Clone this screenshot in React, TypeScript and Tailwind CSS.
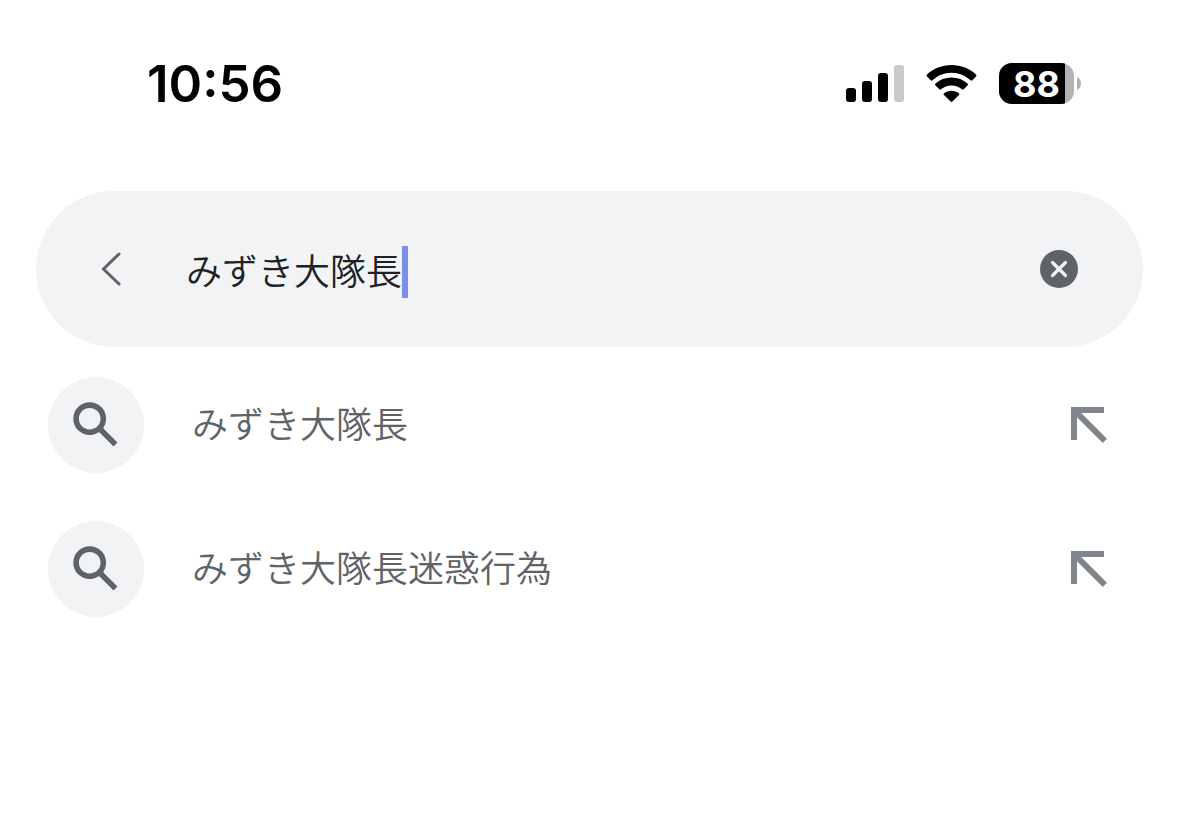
import { useState } from 'react';

const suggestions = ['みずき大隊長', 'みずき大隊長迷惑行為'];

const SignalIcon = () => (
  <svg width="58" height="37" viewBox="0 0 58 37" aria-hidden="true">
    <rect x="0" y="23" width="10" height="14" rx="3" />
    <rect x="16" y="16" width="10" height="21" rx="3" />
    <rect x="32" y="8" width="10" height="29" rx="3" />
    <rect x="48" y="0" width="10" height="37" rx="3" fill="#cacaca" />
  </svg>
);

const WifiIcon = () => (
  <svg width="51" height="37" viewBox="0 0 50 37" aria-hidden="true">
    <path d="M.5 9.500C7 3.500 15.500 0 25 0s18 3.500 24.500 9.500c.6.600.6 1.400 0 2l-3.700 3.800c-.5.500-1.200.5-1.800 0C39 10.500 32.500 7.700 25 7.700S11 10.500 6 15.300c-.6.500-1.300.5-1.800 0L.5 11.500c-.6-.6-.6-1.400 0-2z" />
    <path d="M9 18.500c4.200-3.700 9.700-5.900 16-5.900s11.800 2.200 16 5.900c.6.600.6 1.400 0 2l-3.800 3.800c-.5.500-1.200.5-1.800 0-2.800-2.300-6.400-3.800-10.400-3.800s-7.600 1.500-10.400 3.800c-.6.500-1.300.5-1.800 0L9 20.500c-.6-.6-.6-1.400 0-2z" />
    <path d="M17.600 28.200c2-1.600 4.600-2.500 7.400-2.500s5.400.9 7.400 2.500c.6.500.6 1.300.1 1.900l-6.600 6.500c-.5.500-1.300.5-1.800 0l-6.600-6.500c-.5-.6-.5-1.400.1-1.900z" />
  </svg>
);

const Battery = ({ level }: { level: number }) => (
  <div className="flex items-center gap-[3px]">
    <div className="relative flex h-[41px] w-[75px] items-center justify-center overflow-hidden rounded-[13px] bg-[#b2b2b2]">
      <div className="absolute inset-y-0 left-0 bg-black" style={{ width: `${level}%` }} />
      <span className="relative text-4xl font-bold text-white">{level}</span>
    </div>
    <svg width="4" height="13" viewBox="0 0 4 13" aria-hidden="true">
      <path d="M0 0c2.500 1 4 3.500 4 6.500S2.500 12 0 13z" fill="#b2b2b2" />
    </svg>
  </div>
);

const SearchIcon = () => (
  <svg width="46" height="46" viewBox="0 0 46 46" fill="none" stroke="#5f6368" aria-hidden="true">
    <circle cx="16.700" cy="16.700" r="13.600" strokeWidth="5.600" />
    <path d="M26 26l16.500 16.500" strokeWidth="5.400" />
    <path d="M25.500 29.500l4-4" strokeWidth="3" />
  </svg>
);

const InsertIcon = () => (
  <svg width="36" height="36" viewBox="0 0 36 36" fill="#80868b" aria-hidden="true">
    <path d="M0 0h33v6H10.200L36 31.800 31.800 36 6 10.200V33H0z" />
  </svg>
);

interface SuggestionRowProps {
  text: string;
  onInsert: (text: string) => void;
}

const SuggestionRow = ({ text, onInsert }: SuggestionRowProps) => (
  <li className="flex h-36 items-center">
    <a href="#" className="flex flex-1 items-center gap-12 text-[#5f6368]">
      <span className="flex size-24 items-center justify-center rounded-full bg-[#f1f3f5]">
        <SearchIcon />
      </span>
      <span className="pb-1.5">{text}</span>
    </a>
    <button type="button" aria-label={`${text}を入力`} onClick={() => onInsert(text)}>
      <InsertIcon />
    </button>
  </li>
);

export default function App() {
  const [query, setQuery] = useState('みずき大隊長');

  return (
    <div className="min-h-screen bg-white font-['Noto_Sans_CJK_JP',sans-serif] text-4xl font-[350]">
      <header className="flex h-[167px] items-center justify-between pr-[98px] pl-[147px] font-['Inter',sans-serif]">
        <time className="pt-0.5 text-[51px] font-semibold text-black">10:56</time>
        <div className="flex items-center gap-[22px]">
          <SignalIcon />
          <WifiIcon />
          <Battery level={88} />
        </div>
      </header>

      <main className="pt-6">
        <form
          role="search"
          className="mx-9 flex h-[156px] items-center rounded-full bg-[#f1f3f5] px-16"
          onSubmit={(e) => e.preventDefault()}
        >
          <button type="button" aria-label="戻る" className="mr-[62px]">
            <svg width="24" height="36" viewBox="0 0 24 36" fill="none" stroke="#5f6368" strokeWidth="3">
              <path d="M19 3L3.500 18 19 33" strokeLinecap="round" />
            </svg>
          </button>
          <div className="flex flex-1 items-center">
            <input
              type="text"
              aria-label="検索"
              className="field-sizing-content max-w-full text-[#202124] caret-transparent outline-none"
              value={query}
              onChange={(e) => setQuery(e.target.value)}
            />
            <span className="mt-1.5 h-13 w-1.5 bg-[#7a90e8]" />
          </div>
          <button type="button" aria-label="消去" onClick={() => setQuery('')}>
            <svg width="40" height="38" viewBox="0 0 40 38">
              <circle cx="20" cy="19" r="19" fill="#5f6368" />
              <path
                d="M13.500 12.500l13 13m0-13l-13 13"
                stroke="#f1f3f5"
                strokeWidth="3.200"
                strokeLinecap="round"
              />
            </svg>
          </button>
        </form>

        <ul className="mt-1.5 pr-[72px] pl-12">
          {suggestions.map((text) => (
            <SuggestionRow key={text} text={text} onInsert={setQuery} />
          ))}
        </ul>
      </main>
    </div>
  );
}
